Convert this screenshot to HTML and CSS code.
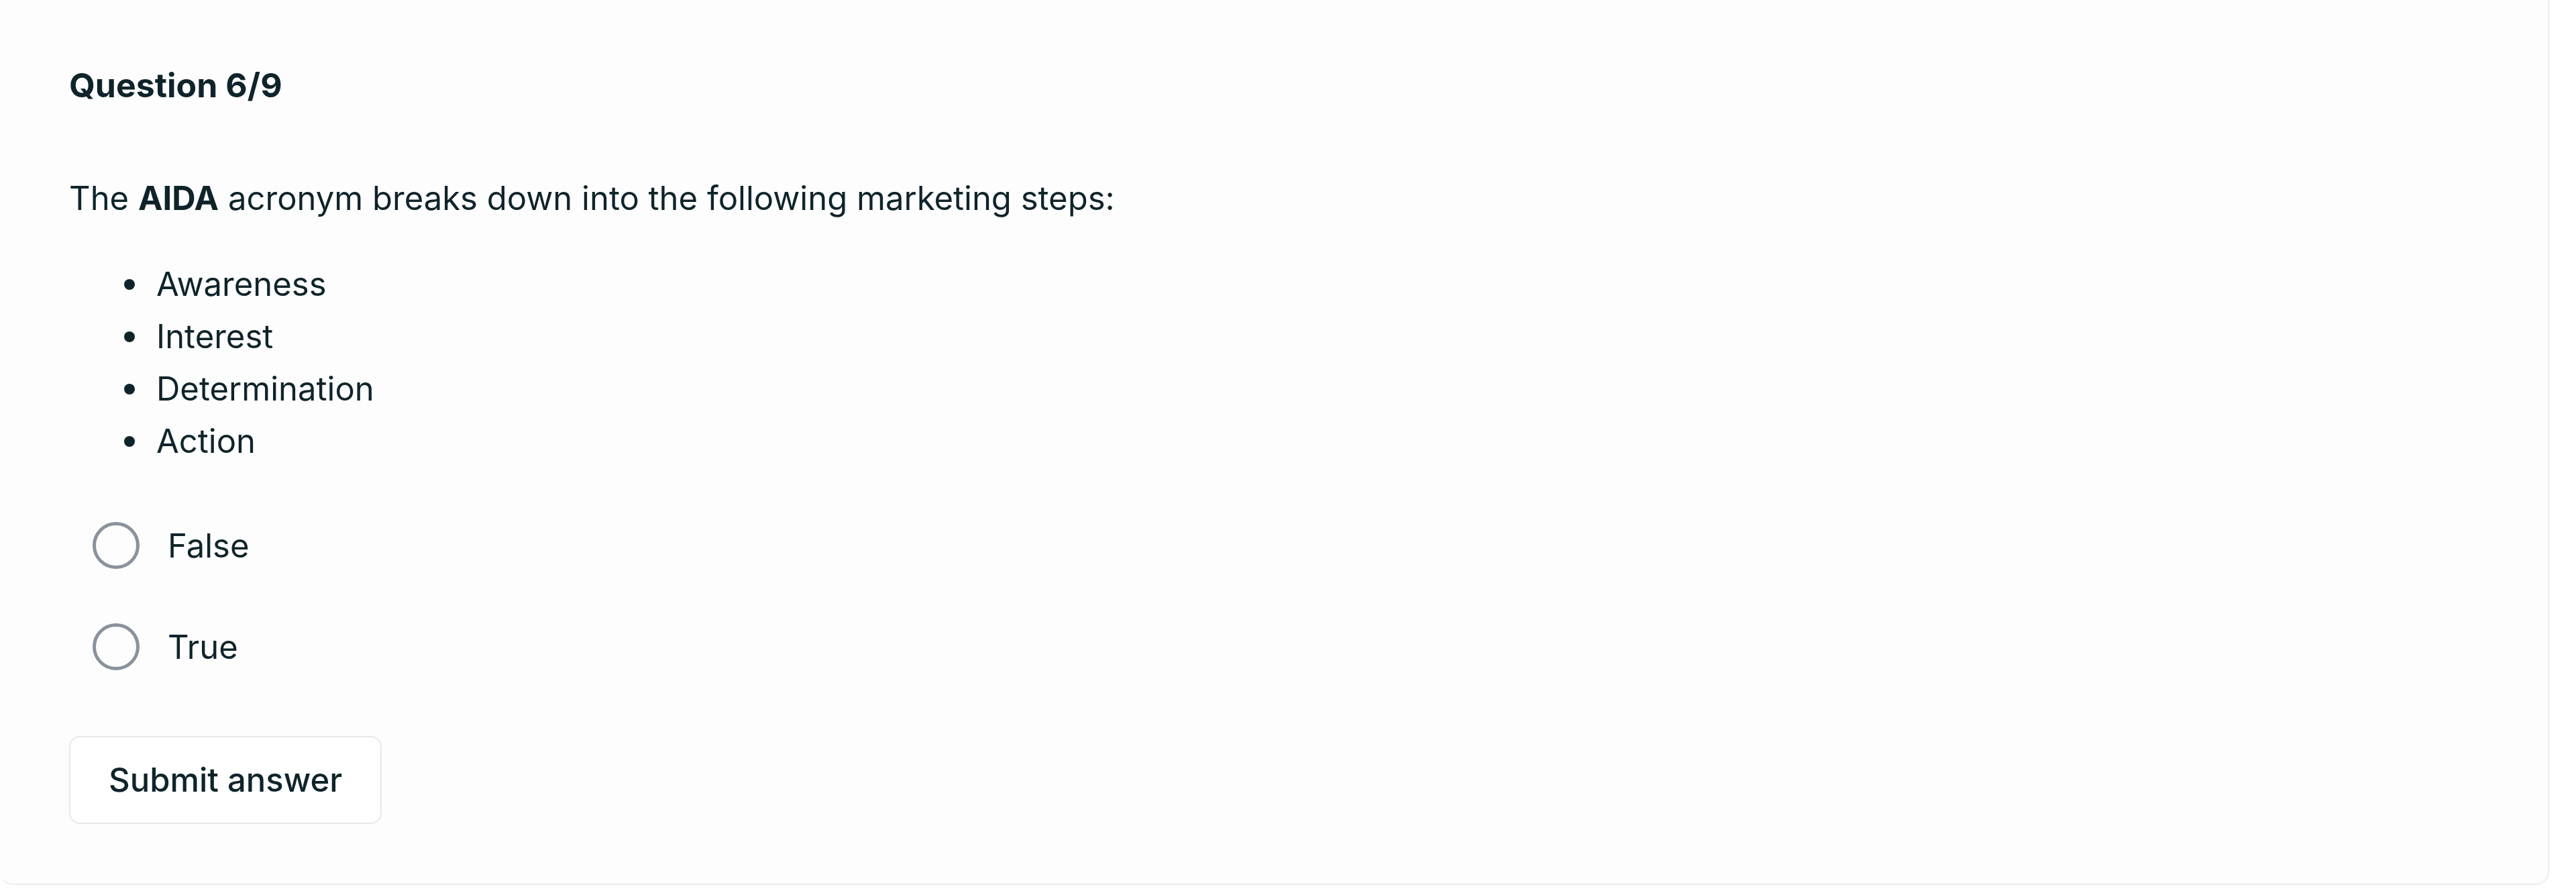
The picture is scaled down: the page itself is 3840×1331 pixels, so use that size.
FILE: index.html
```html
<!DOCTYPE html>
<html lang="en">
<head>
    <meta charset="UTF-8">
    <meta name="viewport" content="width=device-width, initial-scale=1.0">
    <title>Quiz</title>
    <link rel="stylesheet" href="styles.css">
</head>
<body>
    <div class="quizCard">
        <h2 class="quizTitle">Question 6/9</h2>

        <p class="quizText">The <strong>AIDA</strong> acronym breaks down into the following marketing steps:</p>
        <ul class="quizList">
            <li>Awareness</li>
            <li>Interest</li>
            <li>Determination</li>
            <li>Action</li>
        </ul>

        <div class="answers">
            <label class="answer">
                <input type="radio" name="answer" value="false">
                <span class="radioMark"></span>
                <span>False</span>
            </label>
            <label class="answer">
                <input type="radio" name="answer" value="true">
                <span class="radioMark"></span>
                <span>True</span>
            </label>
        </div>

        <button class="submitBtn" type="button">Submit answer</button>
    </div>
</body>
</html>
```

FILE: styles.css
```css
body {
    margin: 0;
    background: #fff;
    font-family: Inter, "Noto Sans", sans-serif;
    color: #0f242a;
}

.quizCard {
    width: 3800px;
    box-sizing: border-box;
    padding: 97px 103px 89px;
    background: #fdfdfd;
    border: 2px solid #ececef;
    border-top: none;
    border-left: none;
    border-radius: 0 0 20px 20px;
}

.quizTitle {
    margin: 0;
    font-size: 50px;
    line-height: 60px;
    font-weight: 700;
}

.quizText {
    margin: 103px 0 0;
    font-size: 49px;
    line-height: 72px;
}

.quizText strong {
    font-weight: 700;
}

/* bullet list */
.quizList {
    list-style: none;
    margin: 53px 0 0;
    padding: 0 0 0 82px;
    font-size: 49px;
    line-height: 78px;
}

.quizList li {
    display: flex;
    align-items: center;
}

.quizList li::before {
    content: "";
    width: 16px;
    height: 16px;
    margin-right: 32px;
    border-radius: 50%;
    background: #0f242a;
}

/* answers */
.answers {
    display: flex;
    flex-direction: column;
    gap: 73px;
    margin-top: 77px;
}

.answer {
    display: flex;
    align-items: center;
    height: 78px;
    padding-left: 35px;
    font-size: 49px;
    cursor: pointer;
}

.answer input {
    display: none;
}

.radioMark {
    width: 70px;
    height: 70px;
    box-sizing: border-box;
    margin-right: 42px;
    border: 5px solid #8a929c;
    border-radius: 50%;
}

.submitBtn {
    display: flex;
    align-items: center;
    height: 131px;
    margin-top: 94px;
    padding: 0 57px;
    box-sizing: border-box;
    background: #fff;
    border: 2px solid #e7e8eb;
    border-radius: 16px;
    font-family: inherit;
    font-size: 49px;
    font-weight: 500;
    color: #0f242a;
}
```
